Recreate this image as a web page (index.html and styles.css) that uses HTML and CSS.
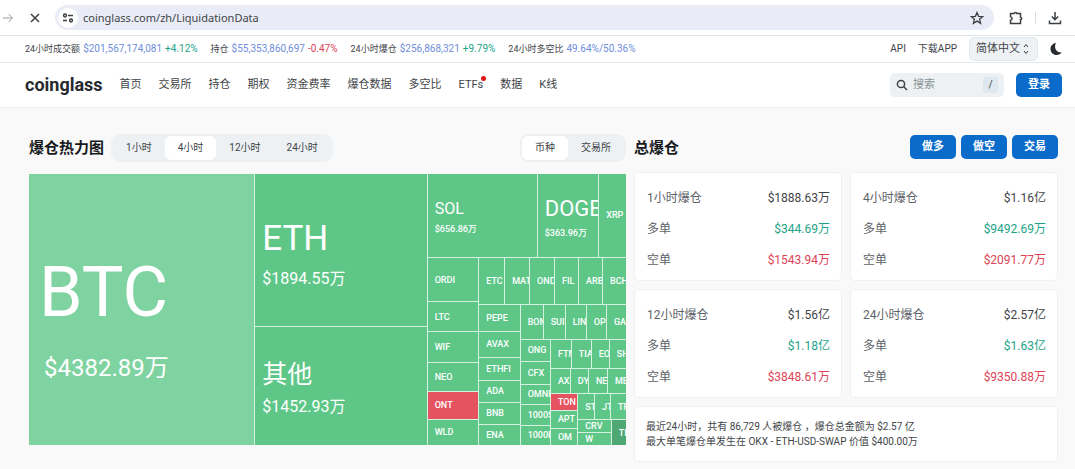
FILE: index.html
```html
<!DOCTYPE html>
<html lang="zh-CN">
<head>
<meta charset="utf-8">
<meta name="viewport" content="width=device-width, initial-scale=1">
<title>coinglass</title>
<link rel="stylesheet" href="styles.css">
</head>
<body>
<div class="browser">
  <button class="icon-btn" aria-label="前进"><svg class="forward" width="12" height="12" viewBox="0 0 12 12"><path d="M1 6h9M6.500 2l4 4-4 4"/></svg></button>
  <button class="icon-btn stop" aria-label="停止"><svg width="12" height="12" viewBox="0 0 12 12"><path d="M2 2l8 8M10 2l-8 8"/></svg></button>
  <div class="address">
    <span class="site-info"><svg width="12" height="12" viewBox="0 0 12 12"><circle cx="3" cy="3.500" r="1.400"/><path d="M6 3.500h5M1 8.500h4"/><circle cx="9" cy="8.500" r="1.400"/></svg></span>
    <input class="url" type="text" aria-label="地址" value="coinglass.com/zh/LiquidationData">
    <svg width="14" height="14" viewBox="0 0 14 14"><path d="M7 1.500l1.600 3.800 4.100.300-3.100 2.700 1 4L7 10.100l-3.600 2.200 1-4L1.300 5.600l4.100-.300z"/></svg>
  </div>
  <button class="icon-btn" aria-label="扩展"><svg width="14" height="14" viewBox="0 0 14 14"><path d="M1.500 2.500h3.700c.200-1.500 2.400-1.500 2.600 0h3.700v3.700c1.500.200 1.500 2.400 0 2.600v3.700h-10V9.300c2-.300 2-3.300 0-3.600z"/></svg></button>
  <span class="divider"></span>
  <button class="icon-btn download" aria-label="下载"><svg width="14" height="14" viewBox="0 0 14 14"><path d="M7 1v7.500M3.800 5.500L7 8.700l3.200-3.200M1.500 9.500v3h11v-3"/></svg></button>
</div>

<div class="ticker">
  <div class="stat"><span>24小时成交额</span><a href="#">$201,567,174,081</a><b class="up">+4.12%</b></div>
  <div class="stat"><span>持仓</span><a href="#">$55,353,860,697</a><b class="down">-0.47%</b></div>
  <div class="stat"><span>24小时爆仓</span><a href="#">$256,868,321</a><b class="up">+9.79%</b></div>
  <div class="stat"><span>24小时多空比</span><a href="#">49.64%/50.36%</a></div>
  <div class="tools">
    <a href="#">API</a>
    <a href="#">下载APP</a>
    <label class="lang"><select aria-label="语言"><option>简体中文</option></select><svg width="8" height="12" viewBox="0 0 8 12"><path d="M2 4l2-2.500L6 4M2 8l2 2.500L6 8"/></svg></label>
    <button class="icon-btn" aria-label="深色模式"><svg class="moon" width="12" height="14" viewBox="0 0 12 14"><path d="M6 1C2.800 1.300.500 3.800.500 7c0 3.400 2.700 6 6 6 2.200 0 4-1.100 5.100-2.800C7 11.300 3.200 6 6 1z"/></svg></button>
  </div>
</div>

<header class="header">
  <a class="logo" href="#">coinglass</a>
  <nav class="nav">
    <a href="#">首页</a><a href="#">交易所</a><a href="#">持仓</a><a href="#">期权</a><a href="#">资金费率</a><a href="#">爆仓数据</a><a href="#">多空比</a><a class="new" href="#">ETFs</a><a href="#">数据</a><a href="#">K线</a>
  </nav>
  <label class="search"><svg width="12" height="12" viewBox="0 0 12 12"><circle cx="5" cy="5" r="3.600"/><path d="M7.800 7.800l3.200 3.200"/></svg><input type="text" placeholder="搜索" aria-label="搜索"><kbd>/</kbd></label>
  <button class="primary">登录</button>
</header>

<main class="main">
  <section>
    <div class="bar">
      <h2>爆仓热力图</h2>
      <div class="tabs"><button>1小时</button><button class="on">4小时</button><button>12小时</button><button>24小时</button></div>
      <div class="tabs end"><button class="on">币种</button><button>交易所</button></div>
    </div>
    <div class="treemap">
      <div class="cell xl" style="flex-grow:226"><span>BTC</span><small>$4382.89万</small></div>
      <div class="col" style="flex-grow:172">
        <div class="cell lg" style="flex-grow:153"><span>ETH</span><small>$1894.55万</small></div>
        <div class="cell lg other" style="flex-grow:118"><span>其他</span><small>$1452.93万</small></div>
      </div>
      <div class="col" style="flex-grow:199">
        <div class="row" style="flex-grow:83">
          <div class="cell md" style="flex-grow:110"><span>SOL</span><small>$656.86万</small></div>
          <div class="cell md doge" style="flex-grow:61"><span>DOGE</span><small>$363.96万</small></div>
          <div class="cell" style="flex-grow:27">XRP</div>
        </div>
        <div class="row" style="flex-grow:188">
          <div class="col" style="flex-grow:51">
            <div class="cell" style="flex-grow:45">ORDI</div>
            <div class="cell" style="flex-grow:30">LTC</div>
            <div class="cell" style="flex-grow:30">WIF</div>
            <div class="cell" style="flex-grow:29">NEO</div>
            <div class="cell loss" style="flex-grow:28">ONT</div>
            <div class="cell" style="flex-grow:26">WLD</div>
          </div>
          <div class="col" style="flex-grow:148">
            <div class="row" style="flex-grow:47">
              <div class="cell" style="flex-grow:26">ETC</div>
              <div class="cell" style="flex-grow:25">MATIC</div>
              <div class="cell" style="flex-grow:25">ONDO</div>
              <div class="cell" style="flex-grow:24">FIL</div>
              <div class="cell" style="flex-grow:24">ARB</div>
              <div class="cell" style="flex-grow:24">BCH</div>
            </div>
            <div class="row" style="flex-grow:141">
              <div class="col" style="flex-grow:41">
                <div class="cell" style="flex-grow:27">PEPE</div>
                <div class="cell" style="flex-grow:26">AVAX</div>
                <div class="cell" style="flex-grow:23">ETHFI</div>
                <div class="cell" style="flex-grow:22">ADA</div>
                <div class="cell" style="flex-grow:22">BNB</div>
                <div class="cell" style="flex-grow:21">ENA</div>
              </div>
              <div class="col" style="flex-grow:107">
                <div class="row" style="flex-grow:34">
                  <div class="cell" style="flex-grow:23">BOME</div>
                  <div class="cell" style="flex-grow:22">SUI</div>
                  <div class="cell" style="flex-grow:21">LINK</div>
                  <div class="cell" style="flex-grow:20">OP</div>
                  <div class="cell" style="flex-grow:20">GALA</div>
                </div>
                <div class="row" style="flex-grow:107">
                  <div class="col" style="flex-grow:30">
                    <div class="cell" style="flex-grow:22">ONG</div>
                    <div class="cell" style="flex-grow:23">CFX</div>
                    <div class="cell" style="flex-grow:20">OMNI</div>
                    <div class="cell" style="flex-grow:21">1000SATS</div>
                    <div class="cell" style="flex-grow:20">1000PEPE</div>
                  </div>
                  <div class="col" style="flex-grow:77">
                    <div class="row" style="flex-grow:29">
                      <div class="cell" style="flex-grow:21">FTM</div>
                      <div class="cell" style="flex-grow:20">TIA</div>
                      <div class="cell" style="flex-grow:18">EOS</div>
                      <div class="cell" style="flex-grow:17">SHIB</div>
                    </div>
                    <div class="row" style="flex-grow:25">
                      <div class="cell" style="flex-grow:20">AXL</div>
                      <div class="cell" style="flex-grow:18">DYM</div>
                      <div class="cell" style="flex-grow:19">NEAR</div>
                      <div class="cell" style="flex-grow:19">MEME</div>
                    </div>
                    <div class="row" style="flex-grow:53">
                      <div class="col" style="flex-grow:27">
                        <div class="cell loss" style="flex-grow:17">TON</div>
                        <div class="cell" style="flex-grow:18">APT</div>
                        <div class="cell" style="flex-grow:17">OM</div>
                      </div>
                      <div class="col" style="flex-grow:49">
                        <div class="row" style="flex-grow:27">
                          <div class="cell" style="flex-grow:17">STX</div>
                          <div class="cell" style="flex-grow:16">JTO</div>
                          <div class="cell" style="flex-grow:16">TRB</div>
                        </div>
                        <div class="row" style="flex-grow:26">
                          <div class="col" style="flex-grow:34">
                            <div class="cell" style="flex-grow:13">CRV</div>
                            <div class="cell" style="flex-grow:13">W</div>
                          </div>
                          <div class="cell dim" style="flex-grow:15">TIA</div>
                        </div>
                      </div>
                    </div>
                  </div>
                </div>
              </div>
            </div>
          </div>
        </div>
      </div>
    </div>
  </section>

  <section>
    <div class="bar totals">
      <h2>总爆仓</h2>
      <div class="actions"><button class="primary">做多</button><button class="primary">做空</button><button class="primary">交易</button></div>
    </div>
    <div class="cards">
      <dl class="card">
        <div><dt>1小时爆仓</dt><dd>$1888.63万</dd></div>
        <div><dt>多单</dt><dd class="up">$344.69万</dd></div>
        <div><dt>空单</dt><dd class="down">$1543.94万</dd></div>
      </dl>
      <dl class="card">
        <div><dt>4小时爆仓</dt><dd>$1.16亿</dd></div>
        <div><dt>多单</dt><dd class="up">$9492.69万</dd></div>
        <div><dt>空单</dt><dd class="down">$2091.77万</dd></div>
      </dl>
      <dl class="card">
        <div><dt>12小时爆仓</dt><dd>$1.56亿</dd></div>
        <div><dt>多单</dt><dd class="up">$1.18亿</dd></div>
        <div><dt>空单</dt><dd class="down">$3848.61万</dd></div>
      </dl>
      <dl class="card">
        <div><dt>24小时爆仓</dt><dd>$2.57亿</dd></div>
        <div><dt>多单</dt><dd class="up">$1.63亿</dd></div>
        <div><dt>空单</dt><dd class="down">$9350.88万</dd></div>
      </dl>
      <p class="card note">最近24小时，共有 86,729 人被爆仓 ，爆仓总金额为 $2.57 亿<br>最大单笔爆仓单发生在 OKX - ETH-USD-SWAP 价值 $400.00万</p>
    </div>
  </section>
</main>
</body>
</html>
```

FILE: styles.css
```css
* { box-sizing: border-box; }

body {
  margin: 0;
  background: #f9f9f9;
  color: #3f4448;
  font-family: Roboto, "Noto Sans CJK SC", sans-serif;
  font-size: 11px;
  line-height: 16px;
}

a { color: inherit; text-decoration: none; }
button, input, select { font: inherit; color: inherit; border: 0; padding: 0; margin: 0; background: none; }
h2, p, dl, dd { margin: 0; }
svg { display: block; flex: none; fill: none; stroke: #3c4043; stroke-width: 1.5; }

.up { color: #22a387; }
.down { color: #dc4455; }

/* Browser toolbar */
.browser { display: flex; align-items: center; height: 36px; padding: 0 13px 0 2px; background: #fff; border-bottom: 1px solid #e0e6e8; }
.icon-btn { display: block; }
.forward { stroke: #9a9da1; stroke-width: 1; }
.stop { margin: 0 14px 0 15px; }
.address { display: flex; flex: 1; align-items: center; height: 25px; margin-right: 15px; padding: 0 10px 0 3px; border-radius: 13px; background: #e9ecf6; }
.address > svg { stroke-width: 1.3; }
.site-info { display: grid; place-items: center; width: 20px; height: 20px; border-radius: 50%; background: #fff; }
.url { flex: 1; min-width: 0; margin-left: 5px; font-family: "Noto Sans", sans-serif; font-size: 11px; }
.divider { width: 1px; height: 12px; margin: 0 12px; background: #d5dce6; }

/* Market ticker */
.ticker { display: flex; align-items: center; gap: 13px; height: 27px; padding: 0 13px 0 25px; background: #fff; border-bottom: 1px solid #e3e8ec; font-size: 10px; }
.stat { display: flex; gap: 3px; white-space: nowrap; }
.stat span { font-size: 9px; }
.stat a { color: #6e8edb; }
.stat b { font-weight: 400; }
.tools { display: flex; align-items: center; gap: 12px; margin-left: auto; white-space: nowrap; }
.lang { display: flex; align-items: center; height: 24px; padding: 0 7px 0 6px; border: 1px solid #e2e9ee; border-radius: 5px; background: #eef2f5; font-size: 11px; }
.lang select { appearance: none; width: 46px; }
.lang svg { stroke-width: 1; }
.moon { fill: #282c30; stroke: none; }

/* Site header */
.header { display: flex; align-items: center; height: 45px; padding: 0 13px 0 25px; background: #fff; border-bottom: 1px solid #edf0f1; }
.logo { margin-right: 17px; color: #25292e; font-size: 18px; font-weight: 700; line-height: 20px; }
.nav { display: flex; gap: 17px; white-space: nowrap; }
.new { position: relative; }
.new::after { content: ""; position: absolute; top: -1px; right: -3px; width: 5px; height: 5px; border-radius: 50%; background: #e11313; }
.search { display: flex; align-items: center; width: 114px; height: 24px; margin-left: auto; margin-right: 12px; padding: 0 6px; border-radius: 5px; background: #edf1f4; }
.search input { flex: 1; width: 0; margin-left: 5px; }
.search input::placeholder { color: #8a9196; opacity: 1; }
.search kbd { width: 15px; border-radius: 3px; background: #dfe8ee; font: inherit; font-size: 10px; text-align: center; }
.primary { width: 46px; height: 24px; border-radius: 5px; background: #0b6bcb; color: #fff; font-weight: 700; }

/* Content */
.main { display: grid; grid-template-columns: 597fr 424fr; gap: 8px; padding: 26px 17px 7px 29px; }
.main > section { min-width: 0; }
.bar { display: flex; align-items: center; height: 28px; margin-bottom: 12px; }
.totals { margin-bottom: 10px; }
.bar h2 { color: #171a1c; font-size: 15px; line-height: 20px; }
.tabs { display: flex; height: 28px; margin-left: 7px; padding: 2px; border-radius: 9px; background: #edf1f4; font-size: 10px; white-space: nowrap; }
.tabs button { padding: 0 13px; border-radius: 6px; }
.tabs .on { background: #fff; }
.end { margin-left: auto; }
.actions { display: flex; gap: 5px; height: 26px; margin-left: auto; }

/* Treemap: cell sizes come from flex-grow alone, so labels are indented rather than padded */
.treemap { display: flex; gap: 1px; height: 271px; background: #d6f1e0; color: #fff; font-size: 9px; font-weight: 500; }
.treemap .row, .treemap .col, .cell { flex-basis: 0; min-width: 0; min-height: 0; }
.row { display: flex; gap: 1px; }
.col { display: flex; flex-direction: column; gap: 1px; }
.cell { display: flex; flex-direction: column; justify-content: center; overflow: hidden; background: #5ec788; line-height: 10px; text-indent: 7px; white-space: nowrap; }
.loss { background: #e55361; }
.dim { background: #4fa773; }
.md::before, .other::before { content: ""; flex: none; height: 8px; }
.md span { font-size: 16px; font-weight: 400; line-height: 20px; }
.md small { font-size: 9px; line-height: 20px; }
.md.doge span { font-size: 22px; line-height: 28px; }
.lg::before { content: ""; flex: none; height: 16px; }
.lg span { font-size: 35px; font-weight: 400; line-height: 42px; }
.lg small { font-size: 16px; font-weight: 400; line-height: 38px; }
.lg.other::before { height: 10px; }
.lg.other span { font-size: 25px; line-height: 32px; }
.lg.other small { line-height: 32px; }
.xl { text-indent: 10px; background: #7fd3a1; }
.xl::before { content: ""; flex: none; height: 25px; }
.xl span { font-size: 70px; font-weight: 400; line-height: 92px; }
.xl small { text-indent: 15px; font-size: 24px; font-weight: 400; line-height: 60px; }

/* Totals */
.cards { display: grid; grid-template-columns: 1fr 1fr; gap: 8px; }
.card { padding: 10px 11px 4px 12px; border: 1px solid #eff1f2; border-radius: 5px; background: #fff; font-size: 12px; }
.card div { display: flex; justify-content: space-between; line-height: 31px; }
.card dt { color: #5c6268; }
.note { grid-column: 1 / -1; padding: 12px 11px; font-size: 10px; line-height: 15px; }
```
